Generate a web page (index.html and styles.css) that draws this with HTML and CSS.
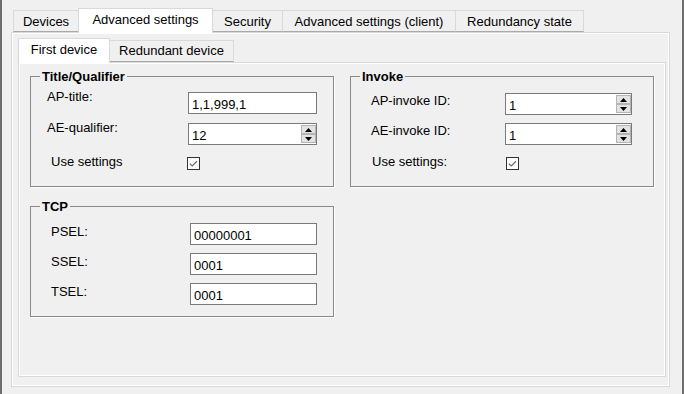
FILE: index.html
```html
<!DOCTYPE html>
<html>
<head>
<meta charset="utf-8">
<title>Advanced settings</title>
<link rel="stylesheet" href="styles.css">
</head>
<body>
<div class="window">
  <div class="tabs">
    <div class="tab w-devices">Devices</div>
    <div class="tab tab-active w-adv">Advanced settings</div>
    <div class="tab w-sec">Security</div>
    <div class="tab w-client">Advanced settings (client)</div>
    <div class="tab w-red">Redundancy state</div>
  </div>
  <div class="panel">
    <div class="subtabs">
      <div class="subtab subtab-active w-first">First device</div>
      <div class="subtab w-second">Redundant device</div>
    </div>
    <div class="subpanel">
      <div class="groups">
        <div class="group g-title">
          <div class="legend">Title/Qualifier</div>
          <div class="rows">
            <div class="row">
              <span class="lbl">AP-title:</span>
              <input class="field" type="text" value="1,1,999,1">
            </div>
            <div class="row">
              <span class="lbl">AE-qualifier:</span>
              <div class="spin">
                <input type="text" value="12">
                <div class="spin-btns">
                  <span class="spin-btn"><svg width="7" height="4" viewBox="0 0 7 4"><polygon points="0,4 7,4 3.5,0" fill="#000"/></svg></span>
                  <span class="spin-btn"><svg width="7" height="4" viewBox="0 0 7 4"><polygon points="0,0 7,0 3.5,4" fill="#000"/></svg></span>
                </div>
              </div>
            </div>
            <div class="row row-check">
              <span class="lbl">Use settings</span>
              <span class="check"><svg width="13" height="13" viewBox="0 0 13 13"><rect x="0.5" y="0.5" width="12" height="12" fill="#fff" stroke="#333"/><path d="M2.8 6.6 L5.2 9 L10 4.3" fill="none" stroke="#6a6a6a" stroke-width="1.2"/></svg></span>
            </div>
          </div>
        </div>

        <div class="group g-invoke">
          <div class="legend">Invoke</div>
          <div class="rows">
            <div class="row">
              <span class="lbl">AP-invoke ID:</span>
              <div class="spin">
                <input type="text" value="1">
                <div class="spin-btns">
                  <span class="spin-btn"><svg width="7" height="4" viewBox="0 0 7 4"><polygon points="0,4 7,4 3.5,0" fill="#000"/></svg></span>
                  <span class="spin-btn"><svg width="7" height="4" viewBox="0 0 7 4"><polygon points="0,0 7,0 3.5,4" fill="#000"/></svg></span>
                </div>
              </div>
            </div>
            <div class="row">
              <span class="lbl">AE-invoke ID:</span>
              <div class="spin">
                <input type="text" value="1">
                <div class="spin-btns">
                  <span class="spin-btn"><svg width="7" height="4" viewBox="0 0 7 4"><polygon points="0,4 7,4 3.5,0" fill="#000"/></svg></span>
                  <span class="spin-btn"><svg width="7" height="4" viewBox="0 0 7 4"><polygon points="0,0 7,0 3.5,4" fill="#000"/></svg></span>
                </div>
              </div>
            </div>
            <div class="row row-check">
              <span class="lbl">Use settings:</span>
              <span class="check"><svg width="13" height="13" viewBox="0 0 13 13"><rect x="0.5" y="0.5" width="12" height="12" fill="#fff" stroke="#333"/><path d="M2.8 6.6 L5.2 9 L10 4.3" fill="none" stroke="#6a6a6a" stroke-width="1.2"/></svg></span>
            </div>
          </div>
        </div>

        <div class="group g-tcp">
          <div class="legend">TCP</div>
          <div class="rows">
            <div class="row">
              <span class="lbl">PSEL:</span>
              <input class="field" type="text" value="00000001">
            </div>
            <div class="row">
              <span class="lbl">SSEL:</span>
              <input class="field" type="text" value="0001">
            </div>
            <div class="row">
              <span class="lbl">TSEL:</span>
              <input class="field" type="text" value="0001">
            </div>
          </div>
        </div>
      </div>
    </div>
  </div>
</div>
</body>
</html>
```

FILE: styles.css
```css
* { box-sizing: border-box; }
html, body { margin: 0; padding: 0; }
body {
  font-family: "Liberation Sans", Arial, sans-serif;
  font-size: 13px;
  color: #000;
  background: #f0f0f0;
}
.window {
  width: 684px;
  height: 394px;
  border-left: 2px solid #6e6e6e;
  border-right: 2px solid #6e6e6e;
  background: #f0f0f0;
  padding-top: 8px;
  overflow: hidden;
}

/* outer tabs */
.tabs {
  display: flex;
  align-items: flex-end;
  height: 24px;
  margin-left: 11px;
}
.tab {
  height: 22px;
  border: 1px solid #d9d9d9;
  border-bottom-color: #a9a9a9;
  background: #f0f0f0;
  text-align: center;
  line-height: 15px;
  padding-top: 3px;
  white-space: nowrap;
}
.tab + .tab { margin-left: -1px; }
.tab-active {
  height: 25px;
  margin-bottom: -1px;
  background: #fff;
  border-bottom: none;
  position: relative;
  z-index: 1;
}
.w-devices { width: 66px; }
.w-adv { width: 135px; }
.w-sec { width: 71px; }
.w-client { width: 174px; }
.w-red { width: 129px; }

.panel {
  margin-left: 9px;
  width: 659px;
  height: 355px;
  border: 1px solid #d9d9d9;
  box-shadow: inset 0 0 0 1px #fff;
  padding: 5px 3px 0 6px;
}

/* inner tabs */
.subtabs {
  display: flex;
  align-items: flex-end;
  height: 24px;
}
.subtab {
  height: 22px;
  border: 1px solid #d9d9d9;
  border-bottom-color: #a9a9a9;
  background: #f0f0f0;
  text-align: center;
  line-height: 15px;
  padding-top: 2px;
  white-space: nowrap;
}
.subtab + .subtab { margin-left: -1px; }
.subtab-active {
  height: 25px;
  margin-bottom: -1px;
  background: #fff;
  border-bottom: none;
  padding-top: 3px;
  position: relative;
  z-index: 1;
}
.w-first { width: 92px; }
.w-second { width: 125px; }

.subpanel {
  width: 648px;
  height: 315px;
  border: 1px solid #d9d9d9;
  box-shadow: inset 0 0 0 1px #fff;
  padding: 13px 0 0 11px;
}

.groups {
  display: grid;
  grid-template-columns: 304px 304px;
  grid-auto-rows: 111px;
  column-gap: 16px;
  row-gap: 19px;
}

.group {
  border: 1px solid #8a8a8a;
  box-shadow: 1px 1px 0 #fff;
}
.legend {
  width: max-content;
  margin: -8px 0 0 9px;
  padding: 0 2px;
  background: #f0f0f0;
  font-weight: bold;
  line-height: 15px;
}

.rows {
  display: flex;
  flex-direction: column;
}
.row {
  display: flex;
  align-items: flex-start;
  height: 22px;
}
.lbl {
  line-height: 15px;
  white-space: nowrap;
  flex: none;
}

.field {
  width: 129px;
  height: 22px;
  border: 1px solid #7a7a7a;
  background: #fff;
  padding: 2px 2px 0 3px;
  margin: 0;
  font: 13px "Liberation Sans", Arial, sans-serif;
  color: #000;
  outline: none;
  border-radius: 0;
}

.spin {
  display: flex;
  width: 129px;
  height: 22px;
  border: 1px solid #7a7a7a;
  background: #fff;
}
.spin input {
  flex: 1;
  min-width: 0;
  height: 20px;
  border: 0;
  margin: 0;
  padding: 2px 2px 0 3px;
  font: 13px "Liberation Sans", Arial, sans-serif;
  color: #000;
  background: transparent;
  outline: none;
}
.spin-btns {
  display: flex;
  flex-direction: column;
  width: 15px;
  padding: 1px 0;
}
.spin-btn {
  height: 9px;
  background: #e3e3e3;
  border: 1px solid #b4b4b4;
  display: flex;
  align-items: center;
  justify-content: center;
}
.spin-btn svg { display: block; }

.check { display: block; width: 13px; height: 13px; }
.check svg { display: block; }

/* Title/Qualifier */
.g-title .rows { margin-top: 8px; padding-left: 16px; gap: 9px; }
.g-title .lbl { width: 141px; margin-top: -3px; }
.g-title .row-check .lbl { margin-top: 0; padding-left: 4px; }
.g-title .check { margin-top: 3px; margin-left: -1px; }

/* Invoke */
.g-invoke .rows { margin-top: 9px; padding-left: 20px; gap: 8px; }
.g-invoke .lbl { width: 134px; }
.g-invoke .spin { width: 127px; }
.g-invoke .row-check .lbl { margin-top: 1px; padding-left: 1px; }
.g-invoke .check { margin-top: 4px; margin-left: 1px; }

/* TCP */
.g-tcp .rows { margin-top: 9px; padding-left: 20px; gap: 8px; }
.g-tcp .lbl { width: 139px; margin-top: 1px; }
.g-tcp .field { width: 127px; }
```
